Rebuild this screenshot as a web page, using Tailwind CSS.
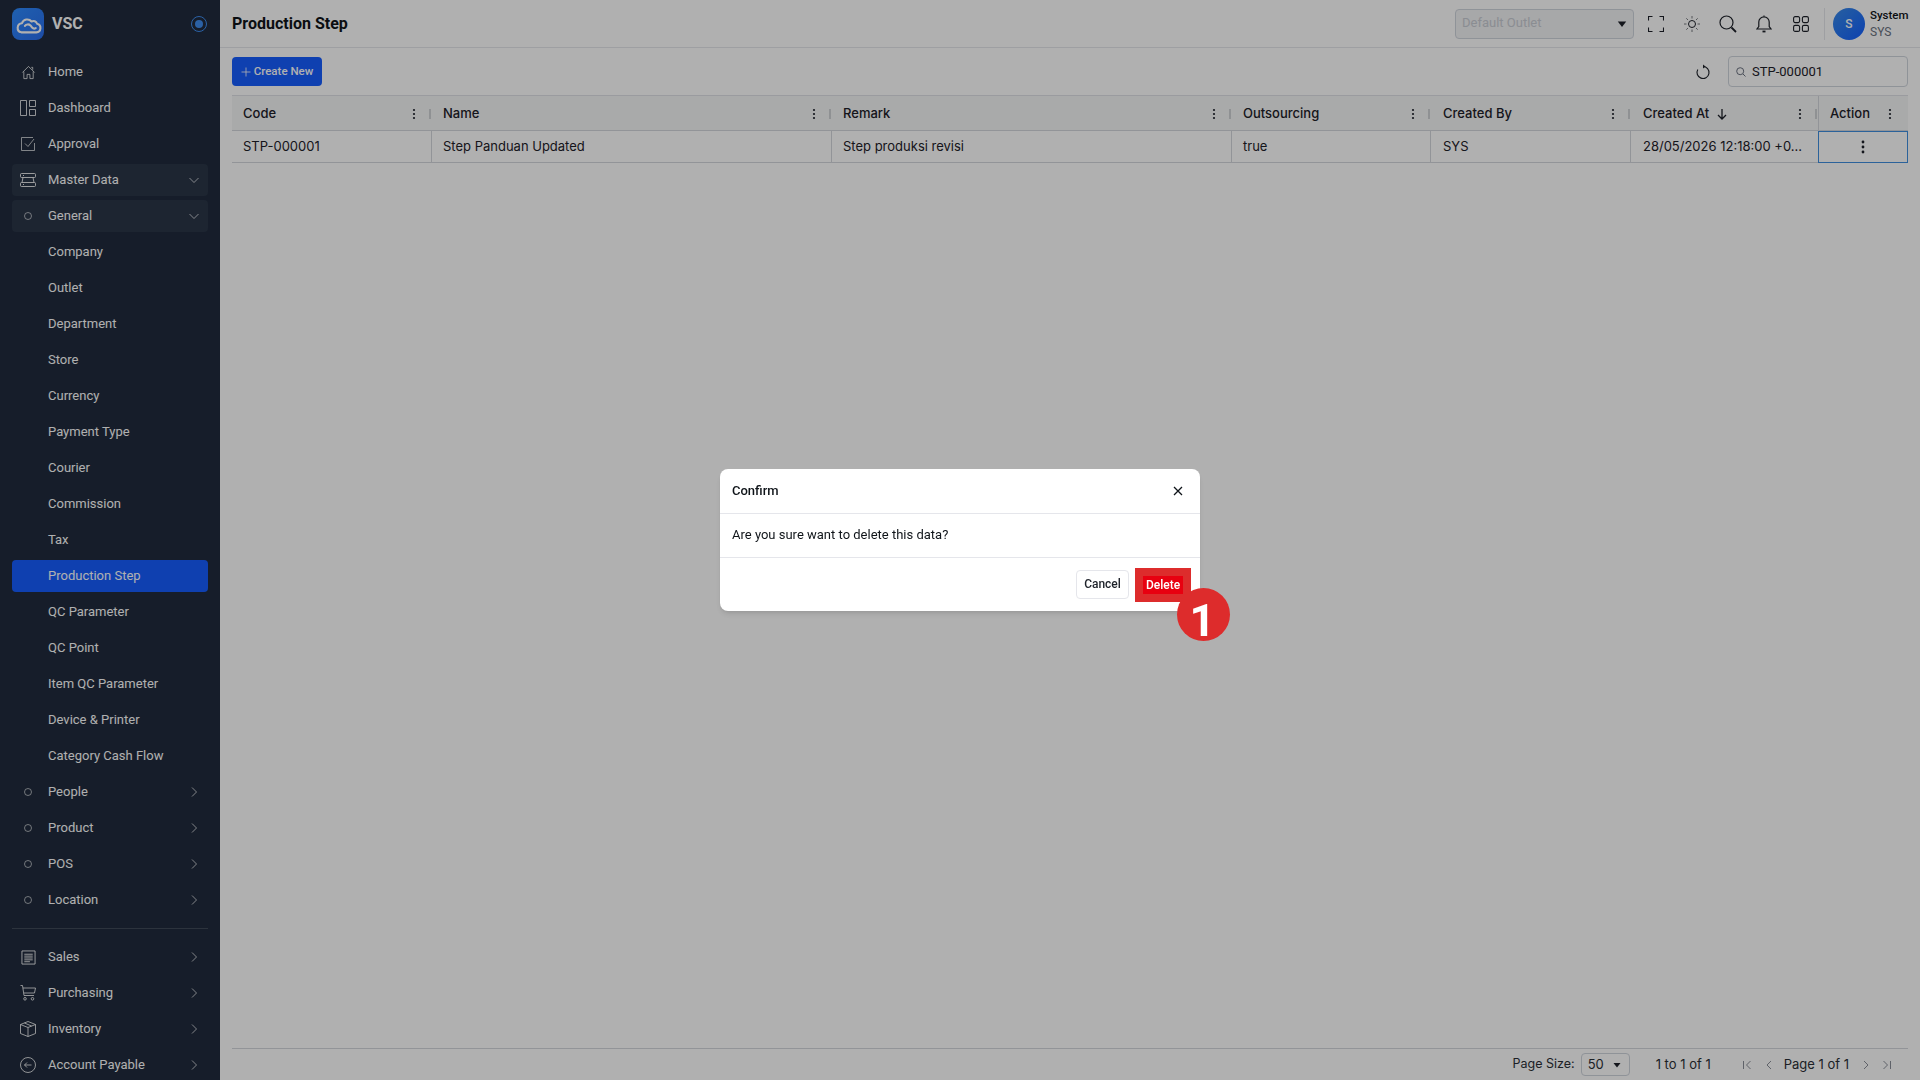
<!DOCTYPE html>
<html lang="en">
<head>
    <meta charset="UTF-8">
    <meta name="viewport" content="width=device-width, initial-scale=1.0">
    <title>Production Step</title>
    <script src="https://cdn.jsdelivr.net/npm/@tailwindcss/browser@4"></script>
</head>
<body class="h-screen overflow-hidden bg-white font-['Roboto',sans-serif] text-[13px] text-[#1d2129]">

<div class="flex h-[1080px]">
    <!-- Sidebar -->
    <aside class="w-[220px] h-full shrink-0 overflow-hidden bg-[#202b3d] text-white">
        <div class="h-[56px] flex items-center pl-3 pr-[13px] pb-2">
            <div class="w-8 h-8 rounded-lg bg-gradient-to-br from-[#2e8cff] to-[#2a6ef0] flex items-center justify-center">
                <svg class="w-[29px] h-[29px]" viewBox="0 0 24 24" fill="none" stroke="white" stroke-width="1.700" stroke-linecap="round" stroke-linejoin="round"><path d="M6 18.500h12.500a3.600 3.600 0 0 0 .6-7.100 3.200 3.200 0 0 0-4.600-1.900A4.600 4.600 0 0 0 6.600 11 3.800 3.800 0 0 0 6 18.500z"/><path d="M9 13.200a3 3 0 0 1 4.600-.4l1.400 1.700a2.400 2.400 0 0 0 3 .5"/></svg>
            </div>
            <span class="ml-2 text-base font-bold">VSC</span>
            <span class="ml-auto w-4 h-4 rounded-full border border-[#3f8df0] flex items-center justify-center"><span class="w-2 h-2 rounded-full bg-[#3f8df0]"></span></span>
        </div>

        <nav class="px-3 flex flex-col gap-1">
            <a class="h-8 flex items-center">
                <span class="w-9 flex justify-center pr-1"><svg class="w-[15px] h-[15px]" viewBox="0 0 16 16" fill="none" stroke="currentColor" stroke-opacity=".8"><path d="M1.500 8 8 1.500 14.500 8M3 7v7.500h3.500V10h3v4.500H13V7M11 2.500h1.500V5"/></svg></span>
                Home
            </a>
            <a class="h-8 flex items-center">
                <span class="w-9 flex justify-center pr-1"><svg class="w-4 h-4" viewBox="0 0 16 16" fill="none" stroke="currentColor" stroke-opacity=".8"><path d="M.5.500h6v15h-6zM9.500.500h6v6h-6zM9.500 9.500h6v6h-6z"/></svg></span>
                Dashboard
            </a>
            <a class="h-8 flex items-center">
                <span class="w-9 flex justify-center pr-1"><svg class="w-4 h-4" viewBox="0 0 16 16" fill="none" stroke="currentColor" stroke-opacity=".7"><path d="M14.500 7v7.500h-13v-13H13M5 7.500l3 3 6-7.500"/></svg></span>
                Approval
            </a>
            <a class="h-8 flex items-center rounded bg-[#2a3648]">
                <span class="w-9 flex justify-center pr-1"><svg class="w-4 h-4" viewBox="0 0 16 16" fill="none" stroke="currentColor" stroke-opacity=".85"><path d="M1.500 1.500h13a1 1 0 0 1 1 1v2a1 1 0 0 1-1 1h-13a1 1 0 0 1-1-1v-2a1 1 0 0 1 1-1zM1.500 10.500h13a1 1 0 0 1 1 1v2a1 1 0 0 1-1 1h-13a1 1 0 0 1-1-1v-2a1 1 0 0 1 1-1zM3 5.500l-1 5M13 5.500l1 5"/><path d="M3 3.500h1M3 12.500h1"/></svg></span>
                Master Data
                <svg class="w-3 h-3 ml-auto mr-2" viewBox="0 0 12 12" fill="none" stroke="currentColor" stroke-opacity=".7"><path d="m1.500 4 4.500 4.500L10.500 4"/></svg>
            </a>
            <a class="h-8 flex items-center rounded bg-[#2a3648]">
                <span class="w-9 flex justify-center pr-1"><span class="w-2 h-2 rounded-full border border-white/60"></span></span>
                General
                <svg class="w-3 h-3 ml-auto mr-2" viewBox="0 0 12 12" fill="none" stroke="currentColor" stroke-opacity=".7"><path d="m1.500 4 4.500 4.500L10.500 4"/></svg>
            </a>
            <a class="h-8 flex items-center pl-9">Company</a>
            <a class="h-8 flex items-center pl-9">Outlet</a>
            <a class="h-8 flex items-center pl-9">Department</a>
            <a class="h-8 flex items-center pl-9">Store</a>
            <a class="h-8 flex items-center pl-9">Currency</a>
            <a class="h-8 flex items-center pl-9">Payment Type</a>
            <a class="h-8 flex items-center pl-9">Courier</a>
            <a class="h-8 flex items-center pl-9">Commission</a>
            <a class="h-8 flex items-center pl-9">Tax</a>
            <a class="h-8 flex items-center pl-9 rounded bg-[#165dff]">Production Step</a>
            <a class="h-8 flex items-center pl-9">QC Parameter</a>
            <a class="h-8 flex items-center pl-9">QC Point</a>
            <a class="h-8 flex items-center pl-9">Item QC Parameter</a>
            <a class="h-8 flex items-center pl-9">Device &amp; Printer</a>
            <a class="h-8 flex items-center pl-9">Category Cash Flow</a>
            <a class="h-8 flex items-center">
                <span class="w-9 flex justify-center pr-1"><span class="w-2 h-2 rounded-full border border-white/60"></span></span>
                People
                <svg class="w-3 h-3 ml-auto mr-2" viewBox="0 0 12 12" fill="none" stroke="currentColor" stroke-opacity=".7"><path d="m4 1.500 4.500 4.500L4 10.500"/></svg>
            </a>
            <a class="h-8 flex items-center">
                <span class="w-9 flex justify-center pr-1"><span class="w-2 h-2 rounded-full border border-white/60"></span></span>
                Product
                <svg class="w-3 h-3 ml-auto mr-2" viewBox="0 0 12 12" fill="none" stroke="currentColor" stroke-opacity=".7"><path d="m4 1.500 4.500 4.500L4 10.500"/></svg>
            </a>
            <a class="h-8 flex items-center">
                <span class="w-9 flex justify-center pr-1"><span class="w-2 h-2 rounded-full border border-white/60"></span></span>
                POS
                <svg class="w-3 h-3 ml-auto mr-2" viewBox="0 0 12 12" fill="none" stroke="currentColor" stroke-opacity=".7"><path d="m4 1.500 4.500 4.500L4 10.500"/></svg>
            </a>
            <a class="h-8 flex items-center">
                <span class="w-9 flex justify-center pr-1"><span class="w-2 h-2 rounded-full border border-white/60"></span></span>
                Location
                <svg class="w-3 h-3 ml-auto mr-2" viewBox="0 0 12 12" fill="none" stroke="currentColor" stroke-opacity=".7"><path d="m4 1.500 4.500 4.500L4 10.500"/></svg>
            </a>

            <div class="border-t border-white/15 mt-[8px] mb-[8px]"></div>

            <a class="h-8 flex items-center">
                <span class="w-9 flex justify-center pr-1"><svg class="w-[15px] h-[15px]" viewBox="0 0 16 16" fill="none" stroke="currentColor" stroke-opacity=".9"><path d="M1 1h14v14H1z"/><path d="M3.500 4.500h9M3.500 6.500h9M3.500 8.500h9M3.500 10.500h9M3.500 12.500h6"/></svg></span>
                Sales
                <svg class="w-3 h-3 ml-auto mr-2" viewBox="0 0 12 12" fill="none" stroke="currentColor" stroke-opacity=".7"><path d="m4 1.500 4.500 4.500L4 10.500"/></svg>
            </a>
            <a class="h-8 flex items-center">
                <span class="w-9 flex justify-center pr-1"><svg class="w-4 h-4" viewBox="0 0 16 16" fill="none" stroke="currentColor" stroke-opacity=".8"><path d="M.500.500h2l1.500 10h10M3 3h12.500l-1 5H3.800"/><circle cx="5" cy="13.800" r="1.300"/><circle cx="12.500" cy="13.800" r="1.300"/></svg></span>
                Purchasing
                <svg class="w-3 h-3 ml-auto mr-2" viewBox="0 0 12 12" fill="none" stroke="currentColor" stroke-opacity=".7"><path d="m4 1.500 4.500 4.500L4 10.500"/></svg>
            </a>
            <a class="h-8 flex items-center">
                <span class="w-9 flex justify-center pr-1"><svg class="w-4 h-4" viewBox="0 0 16 16" fill="none" stroke="currentColor" stroke-opacity=".8" stroke-linejoin="round"><path d="M8 .500 15.500 3.500v9L8 15.500.500 12.500v-9zM.500 3.500 8 6.500l7.500-3M8 6.500v9M4.500 2l7 3"/></svg></span>
                Inventory
                <svg class="w-3 h-3 ml-auto mr-2" viewBox="0 0 12 12" fill="none" stroke="currentColor" stroke-opacity=".7"><path d="m4 1.500 4.500 4.500L4 10.500"/></svg>
            </a>
            <a class="h-8 flex items-center">
                <span class="w-9 flex justify-center pr-1"><svg class="w-4 h-4" viewBox="0 0 16 16" fill="none" stroke="currentColor" stroke-opacity=".8"><circle cx="8" cy="8" r="7.500"/><path d="M11.500 8h-7M7 5.500 4.500 8 7 10.500"/></svg></span>
                Account Payable
                <svg class="w-3 h-3 ml-auto mr-2" viewBox="0 0 12 12" fill="none" stroke="currentColor" stroke-opacity=".7"><path d="m4 1.500 4.500 4.500L4 10.500"/></svg>
            </a>
        </nav>
    </aside>

    <!-- Main -->
    <main class="flex-1 flex flex-col min-w-0">
        <header class="h-[48px] shrink-0 flex items-center pl-3 pr-3 border-b border-[#e5e6eb]">
            <h1 class="text-base font-bold text-[#0f1419]">Production Step</h1>
            <div class="ml-auto w-[179px] h-[30px] rounded-[4px] border border-[#d0d5dd] bg-[#f2f3f5] flex items-center pl-[6px] pr-[5px] pb-[2px] text-[#c9cdd4] text-[13px]">
                Default Outlet
                <svg class="w-3 h-3 ml-auto mt-[2px]" viewBox="0 0 10 10" fill="#1d2129"><path d="M1.500 3h7L5 7.500z"/></svg>
            </div>
            <svg class="ml-[14px] w-4 h-4 text-[#1d2129]" viewBox="0 0 16 16" fill="none" stroke="currentColor" stroke-width="1.100"><path d="M.500 4.500v-4h4M11.500.500h4v4M15.500 11.500v4h-4M4.500 15.500h-4v-4"/></svg>
            <svg class="ml-[20px] w-4 h-4 text-[#1d2129]" viewBox="0 0 16 16" fill="none" stroke="currentColor"><circle cx="8" cy="8" r="3.500"/><path stroke-opacity=".6" d="M8 0v2.500M8 13.500V16M0 8h2.500M13.500 8H16M2.300 2.300 4 4M12 12l1.700 1.700M2.300 13.700 4 12M12 4l1.700-1.700"/></svg>
            <svg class="ml-[19px] w-[18px] h-[18px] text-[#1d2129]" viewBox="0 0 18 18" fill="none" stroke="currentColor" stroke-width="1.200"><circle cx="7.500" cy="7.500" r="6.500"/><path stroke-width="1.800" d="m12.500 12.500 4.500 4.500"/></svg>
            <svg class="ml-[19px] w-4 h-[18px] text-[#1d2129]" viewBox="0 0 16 18" fill="none" stroke="currentColor" stroke-width="1.200"><path d="M1 14h14l-1.800-2.500V7a5.200 5.200 0 0 0-10.400 0v4.500z"/><path d="M8 .500v1"/><path stroke-width="1.800" d="M6.500 16.500h3"/></svg>
            <svg class="ml-[21px] w-4 h-4 text-[#1d2129]" viewBox="0 0 16 16" fill="none" stroke="currentColor" stroke-width="1.100"><rect x=".6" y=".6" width="6" height="6" rx="1.500"/><rect x="9.400" y=".6" width="6" height="6" rx="1.500"/><rect x=".6" y="9.400" width="6" height="6" rx="1.500"/><rect x="9.400" y="9.400" width="6" height="6" rx="1.500"/></svg>
            <div class="ml-[15px] h-8 border-l border-[#e5e6eb]"></div>
            <div class="ml-[8px] w-8 h-8 rounded-full bg-gradient-to-br from-[#3a8ae8] to-[#165dff] text-white text-xs font-medium flex items-center justify-center">S</div>
            <div class="ml-[5px] w-[38px] text-xs leading-4 -mt-[1px]">
                <div class="font-medium text-[11.5px] text-[#0f1419]">System</div>
                <div class="text-[#6b7280] mt-px">SYS</div>
            </div>
        </header>

        <section class="flex-1 flex flex-col px-3 min-h-0">
            <div class="h-[47px] shrink-0 flex items-center">
                <button class="w-[90px] h-[29px] rounded-[4px] bg-[#165dff] text-white text-[11.5px] font-medium flex items-center justify-center gap-[3px]">
                    <svg class="w-2.5 h-2.5" viewBox="0 0 10 10" fill="none" stroke="currentColor" stroke-opacity=".8"><path d="M5 .500v9M.500 5h9"/></svg>
                    Create New
                </button>
                <svg class="ml-auto w-4 h-4 text-[#1d2129]" viewBox="0 0 16 16" fill="none" stroke="currentColor" stroke-width="1.100"><path d="M8 2.500a6 6 0 1 1-5.200 3"/><path d="M8 .500 10.500 2.500 8 4.500z" fill="currentColor" stroke="none"/></svg>
                <div class="ml-[17px] w-[180px] h-[31px] rounded-[4px] border border-[#d0d5dd] flex items-center pl-[7px] gap-[6px] text-[#1d2129]">
                    <svg class="w-2.5 h-2.5 text-[#6b7280]" viewBox="0 0 10 10" fill="none" stroke="currentColor"><circle cx="4.200" cy="4.200" r="3.500"/><path d="m7 7 2.500 2.500"/></svg>
                    STP-000001
                </div>
            </div>

            <!-- Table -->
            <div class="border-t border-[#dfe1e6] grid grid-cols-[200px_400px_400px_199px_200px_187px_90px] font-['Inter',sans-serif]">
                <div class="h-[35px] pt-[2px] bg-[#f5f6f7] border-b border-[#d4d7dc] flex items-center pl-[11px] pr-px font-medium">
                    <span class="flex-1">Code</span>
                    <svg class="w-1 h-3 mr-[13px]" viewBox="0 0 4 12" fill="currentColor"><circle cx="2" cy="2" r="1.100"/><circle cx="2" cy="6" r="1.100"/><circle cx="2" cy="10" r="1.100"/></svg>
                    <span class="w-[2px] h-[10px] bg-[#cfd2d6]"></span>
                </div>
                <div class="h-[35px] pt-[2px] bg-[#f5f6f7] border-b border-[#d4d7dc] flex items-center pl-[11px] pr-px font-medium">
                    <span class="flex-1">Name</span>
                    <svg class="w-1 h-3 mr-[13px]" viewBox="0 0 4 12" fill="currentColor"><circle cx="2" cy="2" r="1.100"/><circle cx="2" cy="6" r="1.100"/><circle cx="2" cy="10" r="1.100"/></svg>
                    <span class="w-[2px] h-[10px] bg-[#cfd2d6]"></span>
                </div>
                <div class="h-[35px] pt-[2px] bg-[#f5f6f7] border-b border-[#d4d7dc] flex items-center pl-[11px] pr-px font-medium">
                    <span class="flex-1">Remark</span>
                    <svg class="w-1 h-3 mr-[13px]" viewBox="0 0 4 12" fill="currentColor"><circle cx="2" cy="2" r="1.100"/><circle cx="2" cy="6" r="1.100"/><circle cx="2" cy="10" r="1.100"/></svg>
                    <span class="w-[2px] h-[10px] bg-[#cfd2d6]"></span>
                </div>
                <div class="h-[35px] pt-[2px] bg-[#f5f6f7] border-b border-[#d4d7dc] flex items-center pl-[11px] pr-px font-medium">
                    <span class="flex-1">Outsourcing</span>
                    <svg class="w-1 h-3 mr-[13px]" viewBox="0 0 4 12" fill="currentColor"><circle cx="2" cy="2" r="1.100"/><circle cx="2" cy="6" r="1.100"/><circle cx="2" cy="10" r="1.100"/></svg>
                    <span class="w-[2px] h-[10px] bg-[#cfd2d6]"></span>
                </div>
                <div class="h-[35px] pt-[2px] bg-[#f5f6f7] border-b border-[#d4d7dc] flex items-center pl-3 pr-px font-medium">
                    <span class="flex-1">Created By</span>
                    <svg class="w-1 h-3 mr-[13px]" viewBox="0 0 4 12" fill="currentColor"><circle cx="2" cy="2" r="1.100"/><circle cx="2" cy="6" r="1.100"/><circle cx="2" cy="10" r="1.100"/></svg>
                    <span class="w-[2px] h-[10px] bg-[#cfd2d6]"></span>
                </div>
                <div class="h-[35px] pt-[2px] bg-[#f5f6f7] border-b border-[#d4d7dc] flex items-center pl-3 pr-px font-medium">
                    <span>Created At</span>
                    <svg class="ml-[7px] w-3 h-3 flex-1" viewBox="0 0 12 12" preserveAspectRatio="xMinYMid" fill="none" stroke="currentColor" stroke-width="1.300"><path d="M6 1v10M2 7l4 4 4-4"/></svg>
                    <svg class="w-1 h-3 mr-[13px]" viewBox="0 0 4 12" fill="currentColor"><circle cx="2" cy="2" r="1.100"/><circle cx="2" cy="6" r="1.100"/><circle cx="2" cy="10" r="1.100"/></svg>
                    <span class="w-[2px] h-[10px] bg-[#cfd2d6]"></span>
                </div>
                <div class="h-[35px] pt-[2px] bg-[#f5f6f7] border-b border-l border-[#d4d7dc] flex items-center pl-[11px] pr-[16px] font-medium">
                    <span class="flex-1">Action</span>
                    <svg class="w-1 h-3" viewBox="0 0 4 12" fill="currentColor"><circle cx="2" cy="2" r="1.100"/><circle cx="2" cy="6" r="1.100"/><circle cx="2" cy="10" r="1.100"/></svg>
                </div>

                <div class="h-[32px] border-b border-r border-[#d4d7dc] flex items-center pl-[11px]">STP-000001</div>
                <div class="h-[32px] border-b border-r border-[#d4d7dc] flex items-center pl-[11px]">Step Panduan Updated</div>
                <div class="h-[32px] border-b border-r border-[#d4d7dc] flex items-center pl-[11px]">Step produksi revisi</div>
                <div class="h-[32px] border-b border-r border-[#d4d7dc] flex items-center pl-[11px]">true</div>
                <div class="h-[32px] border-b border-r border-[#d4d7dc] flex items-center pl-3">SYS</div>
                <div class="h-[32px] border-b border-[#d4d7dc] flex items-center pl-3 whitespace-nowrap">28/05/2026 12:18:00 +0...</div>
                <div class="h-[32px] border border-[#3f8fe0] flex items-center justify-center">
                    <svg class="w-1 h-[14px]" viewBox="0 0 4 14" fill="#1d2129"><circle cx="2" cy="2" r="1.400"/><circle cx="2" cy="7" r="1.400"/><circle cx="2" cy="12" r="1.400"/></svg>
                </div>
            </div>

            <!-- Pagination -->
            <div class="mt-auto h-[32px] shrink-0 border-t border-[#d4d7dc] flex items-center justify-end pr-[15px] font-['Inter',sans-serif] text-[13px] text-[#2b2f36]">
                <span class="text-[12.5px]">Page Size:</span>
                <span class="ml-[6px] w-[49px] h-[23px] rounded-[4px] border border-[#d0d5dd] flex items-center pl-[6px] pr-[8px]">50
                    <svg class="w-2 h-2 ml-auto" viewBox="0 0 8 8" fill="#1d2129"><path d="M.500 2h7L4 6.500z"/></svg>
                </span>
                <span class="ml-[26px]">1 to 1 of 1</span>
                <svg class="ml-[30px] w-3 h-3 text-[#8a8f98]" viewBox="0 0 12 12" fill="none" stroke="currentColor"><path d="M2.500 2v8M9.500 2l-4 4 4 4"/></svg>
                <svg class="ml-[10px] w-3 h-3 text-[#8a8f98]" viewBox="0 0 12 12" fill="none" stroke="currentColor"><path d="M8 2 4 6l4 4"/></svg>
                <span class="ml-[9px]">Page 1 of 1</span>
                <svg class="ml-[11px] w-3 h-3 text-[#8a8f98]" viewBox="0 0 12 12" fill="none" stroke="currentColor"><path d="m4 2 4 4-4 4"/></svg>
                <svg class="ml-[9px] w-3 h-3 text-[#8a8f98]" viewBox="0 0 12 12" fill="none" stroke="currentColor"><path d="M9.500 2v8M2.500 2l4 4-4 4"/></svg>
            </div>
        </section>
    </main>
</div>

<!-- Confirm dialog -->
<div class="fixed inset-0 bg-black/[0.31] flex items-center justify-center">
    <div class="relative w-[480px] rounded-lg bg-white shadow-md text-[#0f1419]">
        <div class="h-[45px] border-b border-[#e5e6eb] flex items-center pl-3 pr-4 font-medium">
            Confirm
            <svg class="ml-auto w-3 h-3" viewBox="0 0 12 12" fill="none" stroke="currentColor" stroke-width="1.300"><path d="m2 2 8 8M10 2l-8 8"/></svg>
        </div>
        <div class="h-[44px] pb-[2px] border-b border-[#e5e6eb] flex items-center pl-3">Are you sure want to delete this data?</div>
        <div class="h-[53px] flex items-center justify-end pr-[9px]">
            <button class="w-[53px] h-[29px] mb-[1px] rounded-[4px] border border-[#e5e6eb] text-xs font-medium text-[#1d2129]">Cancel</button>
            <div class="ml-[6px] w-[56px] h-[34px] bg-[#dd2c2c] flex items-center justify-center">
                <button class="w-[40px] h-[18px] bg-[#e80010] text-white text-xs font-medium flex items-center justify-center">Delete</button>
            </div>
        </div>
        <span class="absolute left-[457px] top-[119px] w-[53px] h-[53px] pr-[2px] rounded-full bg-[#dd2c2c] text-white font-['Roboto',sans-serif] font-bold text-[45px] leading-[66px] text-center">1</span>
    </div>
</div>

</body>
</html>
